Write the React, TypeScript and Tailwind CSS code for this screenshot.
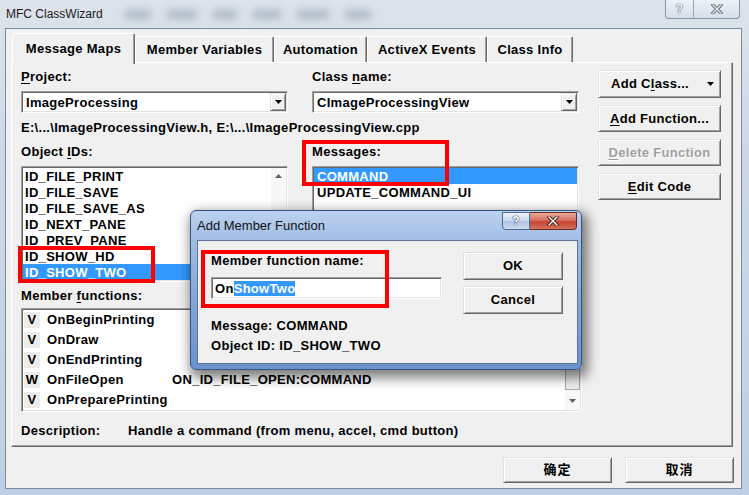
import React from "react";

const font = "font-['Liberation_Sans','Noto_Sans_CJK_SC',Arial,sans-serif]";
const raised =
  "border border-[#696969] border-t-[#e3e3e3] border-l-[#e3e3e3] shadow-[inset_1px_1px_0_#ffffff,inset_-1px_-1px_0_#a0a0a0] bg-[#f0f0f0]";
const sunken =
  "border border-white border-t-[#a0a0a0] border-l-[#a0a0a0] shadow-[inset_1px_1px_0_#696969,inset_-1px_-1px_0_#e3e3e3] bg-white";

const U = ({ c }: { c: string }) => (
  <span className="underline underline-offset-[2px] decoration-1">{c}</span>
);

const DownTri = ({ color = "#000" }: { color?: string }) => (
  <svg width="7" height="4" viewBox="0 0 7 4">
    <path d="M0 0h7L3.5 4z" fill={color} />
  </svg>
);

const UpTri = ({ color = "#606060" }: { color?: string }) => (
  <svg width="7" height="4" viewBox="0 0 7 4">
    <path d="M0 4h7L3.5 0z" fill={color} />
  </svg>
);

const Combo = ({ text }: { text: string }) => (
  <div className={`${sunken} h-[22px] p-[1px] flex items-center`}>
    <span className="flex-1 pl-[3px] pt-[1px] leading-[16px]">{text}</span>
    <div className={`${raised} w-[16px] h-[18px] flex items-center justify-center`}>
      <DownTri />
    </div>
  </div>
);

const objectIds = [
  "ID_FILE_PRINT",
  "ID_FILE_SAVE",
  "ID_FILE_SAVE_AS",
  "ID_NEXT_PANE",
  "ID_PREV_PANE",
  "ID_SHOW_HD",
  "ID_SHOW_TWO",
];

const members = [
  { k: "V", name: "OnBeginPrinting", map: "" },
  { k: "V", name: "OnDraw", map: "" },
  { k: "V", name: "OnEndPrinting", map: "" },
  { k: "W", name: "OnFileOpen", map: "ON_ID_FILE_OPEN:COMMAND" },
  { k: "V", name: "OnPreparePrinting", map: "" },
];

const tabs = ["Message Maps", "Member Variables", "Automation", "ActiveX Events", "Class Info"];
const tabW = ["w-[123px]", "w-[139px]", "w-[93px]", "w-[120px]", "w-[86px]"];

const OutlineX = ({ dark = "#5b6675", light = "#e8edf3", size = 10 }) => (
  <svg width={size + 2} height={size} viewBox="0 0 12 10">
    <path d="M2 1l8 8M10 1l-8 8" stroke={dark} strokeWidth="3.2" strokeLinecap="square" />
    <path d="M2 1l8 8M10 1l-8 8" stroke={light} strokeWidth="1.4" strokeLinecap="square" />
  </svg>
);

const AddMemberDialog = () => (
  <div className="absolute left-[190px] top-[210px] w-[392px] h-[160px] rounded-[6px] border border-[#34557f] bg-[linear-gradient(180deg,#bcd2ef_0%,#9fbce4_20%,#80a4d8_60%,#6a92cc_100%)] shadow-[3px_5px_12px_3px_rgba(0,0,0,0.5)]">
    <div className="h-[29px] flex items-center pl-[6px] text-[13px] text-[#111] font-normal tracking-normal">
      Add Member Function
    </div>
    <div className="absolute top-[1px] right-[4px] flex">
      <div className="w-[28px] h-[18px] rounded-bl-[4px] border border-[#4d6a92] bg-[linear-gradient(180deg,#eef3fa_0%,#c9d8ee_50%,#afc5e4_51%,#cddcf0_100%)] flex items-center justify-center text-[12px] text-white font-bold [text-shadow:0_0_1px_#34455c,0_0_1px_#34455c,0_0_1px_#34455c]">
        ?
      </div>
      <div className="w-[47px] h-[18px] rounded-br-[4px] border border-l-0 border-[#6b2b23] bg-[linear-gradient(180deg,#e9a899_0%,#d6705f_45%,#c44431_55%,#d6735f_100%)] flex items-center justify-center">
        <OutlineX dark="#4a1a14" light="#ffffff" />
      </div>
    </div>
    <div className="ml-[6px] w-[381px] h-[124px] border border-[#5d7497] bg-[#f0f0f0] flex">
      <div className="ml-[13px] mt-[12px] w-[231px] flex flex-col">
        <div className="h-[16px] leading-[16px]">Member function name:</div>
        <div className={`${sunken} mt-[8px] h-[22px] p-[1px] flex items-center`}>
          <span className="pl-[2px] pt-[1px] leading-[16px]">
            On<span className="bg-[#3399ff] text-white">ShowTwo</span>
          </span>
        </div>
        <div className="mt-[19px] h-[16px] leading-[16px]">Message: COMMAND</div>
        <div className="mt-[4px] h-[16px] leading-[16px]">Object ID: ID_SHOW_TWO</div>
      </div>
      <div className="ml-[21px] mt-[11px] w-[100px] flex flex-col gap-[6px]">
        <div className={`${raised} h-[28px] flex items-center justify-center`}>OK</div>
        <div className={`${raised} h-[28px] flex items-center justify-center`}>Cancel</div>
      </div>
    </div>
  </div>
);

export default function App() {
  return (
    <div
      className={`${font} relative w-[749px] h-[495px] overflow-hidden text-[13px] font-bold tracking-[0.3px] text-black bg-[linear-gradient(180deg,#dde3ea_0%,#cfd9e5_30%,#bfcfe3_100%)]`}
    >
      {/* title bar */}
      <div className="h-[28px] flex items-center justify-between">
        <div className="flex items-center">
          <span className="pl-[6px] text-[12px] font-normal tracking-normal text-[#1a1a1a]">
            MFC ClassWizard
          </span>
          <div className="ml-[22px] flex gap-[16px] blur-[4px] opacity-50">
            <div className="w-[26px] h-[9px] bg-[#7d8da3]" />
            <div className="w-[30px] h-[9px] bg-[#7d8da3]" />
            <div className="w-[24px] h-[9px] bg-[#7d8da3]" />
            <div className="w-[28px] h-[9px] bg-[#7d8da3]" />
            <div className="w-[32px] h-[9px] bg-[#7d8da3]" />
            <div className="w-[26px] h-[9px] bg-[#7d8da3]" />
          </div>
        </div>
        <div className="self-start mr-[9px] flex h-[19px] border border-t-0 border-[#8494aa] rounded-b-[4px] bg-[linear-gradient(180deg,#eef2f7,#d5dee9)]">
          <div className="w-[28px] flex items-center justify-center border-r border-[#9aa8ba] text-[12px] font-bold text-[#f3f5f8] [text-shadow:0_0_1px_#5b6675,0_0_1px_#5b6675,0_0_1px_#5b6675]">
            ?
          </div>
          <div className="w-[45px] flex items-center justify-center">
            <OutlineX />
          </div>
        </div>
      </div>

      {/* client area */}
      <div className="ml-[5px] w-[737px] h-[461px] border border-[#7a8aa0] bg-[#f0f0f0] flex flex-col">
        {/* tabs */}
        <div className="h-[33px] pl-[6px] flex items-end">
          {tabs.map((t, i) => (
            <div
              key={t}
              className={`${tabW[i]} flex items-center justify-center border border-b-0 border-white border-r-[#696969] shadow-[inset_-1px_0_0_#a0a0a0] rounded-t-[2px] bg-[#f0f0f0] ${
                i === 0 ? "h-[31px] -mb-[2px] relative z-10 pb-[1px]" : "h-[26px] pt-[1px]"
              }`}
            >
              {t}
            </div>
          ))}
        </div>

        {/* tab panel */}
        <div className="ml-[5px] w-[722px] h-[385px] border border-white border-r-[#696969] border-b-[#696969] shadow-[inset_-1px_-1px_0_#a0a0a0] flex items-start">
          <div className="ml-[9px] pt-[6px] w-[561px] flex flex-col">
            <div className="grid grid-cols-[267px_267px] gap-x-[24px]">
              <div>
                <div className="h-[16px] leading-[16px]">
                  <U c="P" />
                  roject:
                </div>
                <div className="mt-[6px]">
                  <Combo text="ImageProcessing" />
                </div>
              </div>
              <div>
                <div className="h-[16px] leading-[16px]">
                  Class <U c="n" />
                  ame:
                </div>
                <div className="mt-[6px]">
                  <Combo text="CImageProcessingView" />
                </div>
              </div>
            </div>

            <div className="mt-[7px] h-[16px] leading-[16px] whitespace-nowrap">
              E:\...\ImageProcessingView.h, E:\...\ImageProcessingView.cpp
            </div>

            <div className="mt-[8px] grid grid-cols-[267px_267px] gap-x-[24px]">
              <div>
                <div className="h-[16px] leading-[16px]">
                  Object <U c="I" />
                  Ds:
                </div>
                <div className={`${sunken} mt-[6px] h-[116px] p-[1px] flex`}>
                  <div className="flex-1 flex flex-col">
                    {objectIds.map((id, i) => (
                      <div
                        key={id}
                        className={`h-[16px] leading-[17px] pl-[2px] ${
                          i === 6 ? "bg-[#3399ff] text-white" : ""
                        }`}
                      >
                        {id}
                      </div>
                    ))}
                  </div>
                  <div className="w-[15px] bg-[#f7f7f7] flex flex-col items-center pt-[6px]">
                    <UpTri />
                  </div>
                </div>
              </div>
              <div>
                <div className="h-[16px] leading-[16px]">Messages:</div>
                <div className={`${sunken} mt-[6px] h-[116px] p-[1px] flex flex-col`}>
                  <div className="h-[16px] leading-[17px] pl-[3px] bg-[#3399ff] text-white">
                    COMMAND
                  </div>
                  <div className="h-[16px] leading-[17px] pl-[3px]">UPDATE_COMMAND_UI</div>
                </div>
              </div>
            </div>

            <div className="mt-[6px] h-[16px] leading-[16px]">
              Member <U c="f" />
              unctions:
            </div>
            <div className={`${sunken} mt-[4px] h-[104px] p-[1px] flex`}>
              <div className="flex-1 flex flex-col">
                {members.map((m) => (
                  <div key={m.name} className="h-[20px] flex items-center">
                    <div className="ml-[1px] w-[16px] h-[16px] bg-[#ececec] flex items-center justify-center">
                      {m.k}
                    </div>
                    <div className="ml-[7px] w-[125px] whitespace-nowrap">{m.name}</div>
                    <div className="whitespace-nowrap">{m.map}</div>
                  </div>
                ))}
              </div>
              <div className="w-[15px] bg-[#f7f7f7] flex flex-col">
                <div className="h-[40px]" />
                <div className="h-[30px] border border-[#a8a8a8] bg-[#ededed] mt-[10px]" />
                <div className="flex-1 flex items-end justify-center pb-[7px]">
                  <DownTri color="#606060" />
                </div>
              </div>
            </div>

            <div className="mt-[11px] h-[16px] leading-[16px] flex whitespace-nowrap">
              <span className="w-[107px]">Description:</span>
              <span>Handle a command (from menu, accel, cmd button)</span>
            </div>
          </div>

          <div className="ml-[16px] pt-[7px] w-[123px] flex flex-col gap-[7px]">
            <div className={`${raised} h-[28px] pl-[12px] pr-[6px] flex items-center justify-between`}>
              <span>
                Add C<U c="l" />
                ass...
              </span>
              <DownTri />
            </div>
            <div className={`${raised} h-[27px] flex items-center justify-center`}>
              <span>
                <U c="A" />
                dd Function...
              </span>
            </div>
            <div
              className={`${raised} h-[27px] flex items-center justify-center text-[#a0a0a0] [text-shadow:1px_1px_0_#ffffff]`}
            >
              <span>
                <U c="D" />
                elete Function
              </span>
            </div>
            <div className={`${raised} h-[27px] flex items-center justify-center`}>
              <span>
                <U c="E" />
                dit Code
              </span>
            </div>
          </div>
        </div>

        {/* bottom buttons */}
        <div className="mt-[10px] pr-[7px] flex justify-end gap-[13px]">
          <div className={`${raised} w-[109px] h-[26px] flex items-center justify-center tracking-[1px]`}>
            确定
          </div>
          <div className={`${raised} w-[109px] h-[26px] flex items-center justify-center tracking-[1px]`}>
            取消
          </div>
        </div>
      </div>

      <AddMemberDialog />

      {/* red annotation boxes */}
      <div className="absolute left-[18px] top-[246px] w-[137px] h-[37px] border-4 border-[#ff0000]" />
      <div className="absolute left-[302px] top-[140px] w-[147px] h-[46px] border-4 border-[#ff0000]" />
      <div className="absolute left-[201px] top-[250px] w-[188px] h-[58px] border-4 border-[#ff0000]" />
    </div>
  );
}
